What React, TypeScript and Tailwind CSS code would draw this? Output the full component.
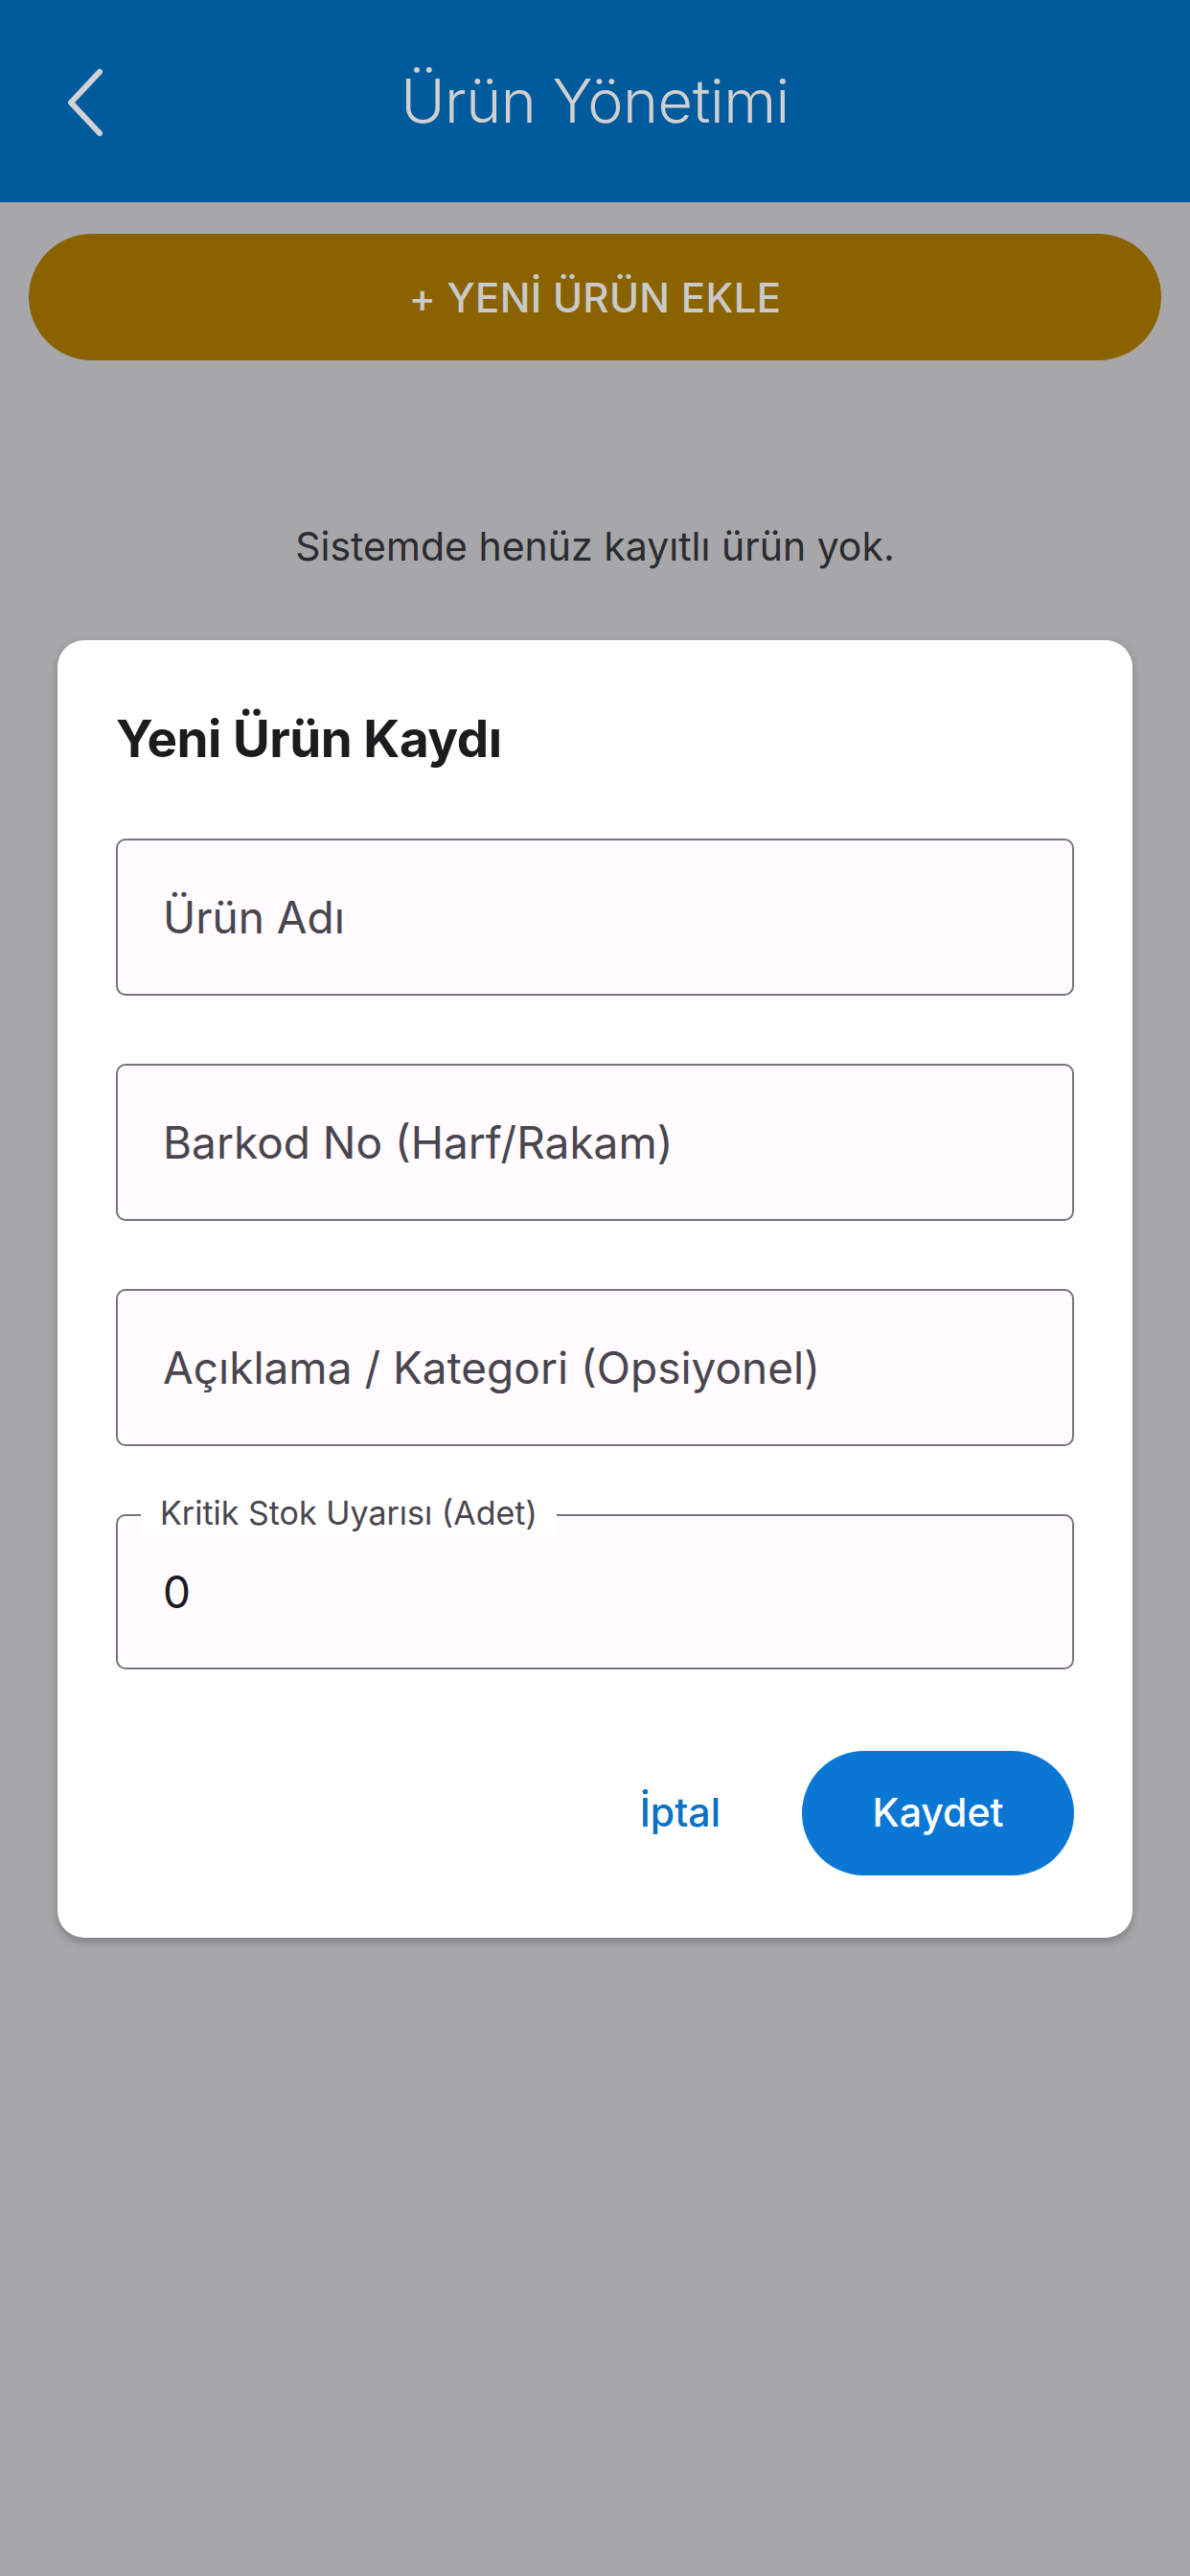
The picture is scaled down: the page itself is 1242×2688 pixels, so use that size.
import React, { useState } from 'react';

const fields = ['Ürün Adı', 'Barkod No (Harf/Rakam)', 'Açıklama / Kategori (Opsiyonel)'];

const App: React.FC = () => {
  const [values, setValues] = useState<string[]>(['', '', '']);
  const [stock, setStock] = useState('0');

  return (
    <div
      className="min-h-[2688px] w-full bg-[#a7a7aa]"
      style={{ fontFamily: 'Inter, "Noto Sans", "Liberation Sans", sans-serif' }}
    >
      <header className="h-[211px] bg-[#005b9c] grid grid-cols-[1fr_auto_1fr] items-center">
        <div className="pl-[66px] pt-[2px]">
          <svg width="44" height="72" viewBox="0 0 44 72" fill="none">
            <path d="M38 4 L8 36 L38 68" stroke="#d2d2d4" strokeWidth="6" strokeLinecap="round" strokeLinejoin="round" />
          </svg>
        </div>
        <h1 className="text-[63px] font-light text-[#d0d0d2] tracking-[-0.5px]">Ürün Yönetimi</h1>
        <div />
      </header>

      <div className="px-[30px] pt-[33px]">
        <button className="w-full h-[132px] rounded-full bg-[#8a6300] text-[#cacaca] text-[42px] font-medium tracking-[0.3px]">
          + YENİ ÜRÜN EKLE
        </button>
      </div>

      <p className="mt-[174px] text-center text-[41px] leading-none text-[#2b2b2f]">
        Sistemde henüz kayıtlı ürün yok.
      </p>

      <div className="mx-[60px] mt-[77px] bg-white rounded-[28px] shadow-[0_4px_10px_rgba(0,0,0,0.25)] px-[61px] pt-[77px] pb-[65px]">
        <h2 className="text-[53px] leading-none font-bold text-[#1c1c1e] tracking-[-0.5px]">Yeni Ürün Kaydı</h2>

        <div className="mt-[77px] flex flex-col gap-[71px]">
          {fields.map((f, i) => (
            <input
              key={f}
              value={values[i]}
              onChange={(e) => setValues(values.map((v, j) => (j === i ? e.target.value : v)))}
              placeholder={f}
              className="h-[164px] w-full rounded-[10px] border-2 border-[#77747c] bg-[#fffbfe] px-[47px] text-[46px] text-[#1c1b1f] placeholder:text-[#49454f] outline-none"
            />
          ))}

          <div className="relative">
            <input
              value={stock}
              onChange={(e) => setStock(e.target.value)}
              className="h-[162px] w-full rounded-[10px] border-2 border-[#77747c] bg-[#fffbfe] px-[47px] text-[46px] text-[#1c1b1f] outline-none"
            />
            <span className="absolute left-[26px] top-[-22px] bg-white px-[20px] text-[34px] leading-[42px] text-[#49454f]">
              Kritik Stok Uyarısı (Adet)
            </span>
          </div>
        </div>

        <div className="mt-[85px] flex items-center justify-end">
          <button className="mr-[85px] text-[41px] font-medium text-[#0a70c2]">İptal</button>
          <button className="h-[130px] w-[284px] rounded-full bg-[#0a77d5] text-[41px] font-medium text-white">
            Kaydet
          </button>
        </div>
      </div>
    </div>
  );
};

export default App;
